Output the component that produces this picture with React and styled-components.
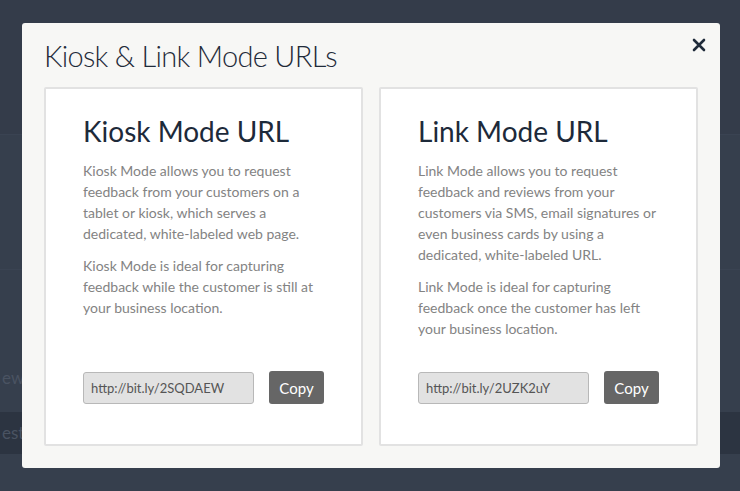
import styled, { createGlobalStyle } from "styled-components";

const GlobalStyle = createGlobalStyle`
  html, body {
    margin: 0;
    padding: 0;
    background: #353e4c;
    font-family: "Lato", "Open Sans", sans-serif;
  }
`;

const Page = styled.div`
  height: 491px;
  overflow: hidden;
  display: flex;
  flex-direction: column;
`;

const Band = styled.div`
  height: ${(p) => p.h}px;
  background: ${(p) => p.bg};
  border-bottom: 1px solid ${(p) => p.line || "transparent"};
  color: #4a5362;
  font-size: 17px;
  display: flex;
  align-items: ${(p) => (p.bottom ? "flex-end" : "center")};
  padding: 0 0 ${(p) => p.pb || 0}px 2px;
  box-sizing: border-box;
`;

const Overlay = styled.div`
  position: fixed;
  inset: 0;
  display: flex;
  justify-content: center;
  align-items: flex-start;
  padding-top: 23px;
`;

const Modal = styled.div`
  position: relative;
  width: 698px;
  height: 445px;
  margin-left: 2px;
  box-sizing: border-box;
  background: #f7f7f5;
  border-radius: 3px;
  padding: 14px 22px 22px 22px;
  display: flex;
  flex-direction: column;
`;

const Title = styled.h1`
  margin: 0 0 12px 0;
  font-family: "Lato", sans-serif;
  font-weight: 300;
  font-size: 29px;
  line-height: 38px;
  color: #1f2b3a;
  letter-spacing: -0.7px;
`;

const Close = styled.button`
  position: absolute;
  top: 15px;
  right: 14px;
  width: 14px;
  height: 14px;
  padding: 0;
  border: none;
  background: none;
  cursor: pointer;
  display: flex;
  align-items: center;
  justify-content: center;
`;

const Cards = styled.div`
  flex: 1;
  display: grid;
  grid-template-columns: 319px 319px;
  gap: 16px;
`;

const Card = styled.section`
  background: #fff;
  border: 2px solid #e2e2e2;
  border-radius: 2px;
  padding: 24px 37px 40px 37px;
  display: flex;
  flex-direction: column;
  min-width: 0;
  box-sizing: border-box;
`;

const CardTitle = styled.h2`
  margin: 0 0 11px 0;
  font-family: "Lato", sans-serif;
  font-weight: 400;
  font-size: 28px;
  line-height: 36px;
  color: #1d2a3a;
`;

const Text = styled.p`
  margin: 0 0 11px 0;
  font-size: 14px;
  line-height: 21px;
  color: #838383;
  font-weight: 400;
`;

const UrlRow = styled.div`
  margin-top: auto;
  display: flex;
  align-items: center;
  gap: 15px;
`;

const UrlInput = styled.input`
  width: 171px;
  height: 32px;
  box-sizing: border-box;
  background: #e2e2e2;
  border: 1px solid #b8b8b8;
  border-radius: 3px;
  padding: 0 7px;
  font-family: "Lato", sans-serif;
  font-size: 13px;
  color: #555;
  outline: none;
`;

const CopyButton = styled.button`
  width: 56px;
  height: 33px;
  background: #666;
  color: #fff;
  border: none;
  border-radius: 3px;
  font-family: "Lato", sans-serif;
  font-size: 15px;
  cursor: pointer;
`;

const modes = [
  {
    title: "Kiosk Mode URL",
    texts: [
      "Kiosk Mode allows you to request feedback from your customers on a tablet or kiosk, which serves a dedicated, white-labeled web page.",
      "Kiosk Mode is ideal for capturing feedback while the customer is still at your business location.",
    ],
    url: "http://bit.ly/2SQDAEW",
  },
  {
    title: "Link Mode URL",
    texts: [
      "Link Mode allows you to request feedback and reviews from your customers via SMS, email signatures or even business cards by using a dedicated, white-labeled URL.",
      "Link Mode is ideal for capturing feedback once the customer has left your business location.",
    ],
    url: "http://bit.ly/2UZK2uY",
  },
];

export default function App() {
  return (
    <>
      <GlobalStyle />
      <Page>
        <Band h={135} bg="#343c4a" line="#3a4352" />
        <Band h={135} bg="#363f4d" line="#3a4352" />
        <Band h={142} bg="#363f4d" bottom pb={23}>ews</Band>
        <Band h={42} bg="#2c3441">est</Band>
        <Band h={37} bg="#363f4d" />
      </Page>
      <Overlay>
        <Modal>
          <Title>Kiosk &amp; Link Mode URLs</Title>
          <Close aria-label="Close">
            <svg width="14" height="14" viewBox="0 0 14 14">
              <path d="M2 2L12 12M12 2L2 12" stroke="#1f2b3a" strokeWidth="2.6" strokeLinecap="round" />
            </svg>
          </Close>
          <Cards>
            {modes.map((m) => (
              <Card key={m.title}>
                <CardTitle>{m.title}</CardTitle>
                {m.texts.map((t) => (
                  <Text key={t}>{t}</Text>
                ))}
                <UrlRow>
                  <UrlInput readOnly value={m.url} />
                  <CopyButton>Copy</CopyButton>
                </UrlRow>
              </Card>
            ))}
          </Cards>
        </Modal>
      </Overlay>
    </>
  );
}
